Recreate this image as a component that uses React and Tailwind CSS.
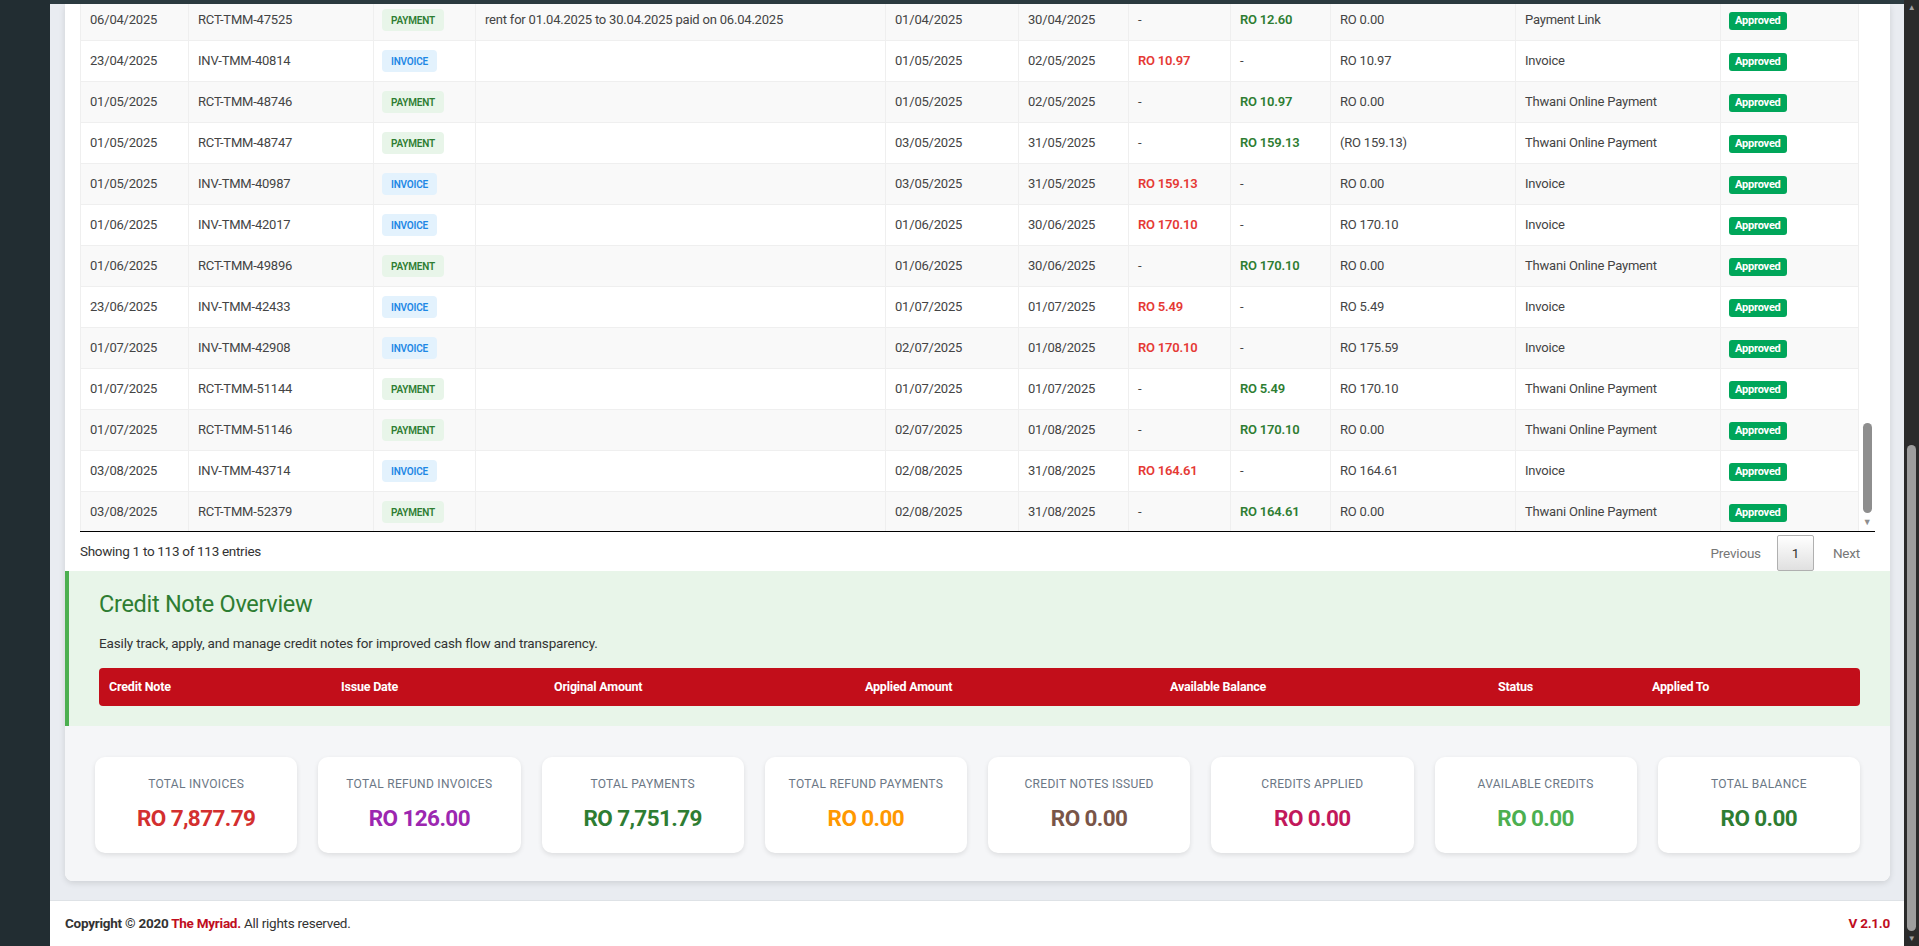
import React from "react";

const rows = [
  ["06/04/2025", "RCT-TMM-47525", "PAYMENT", "rent for 01.04.2025 to 30.04.2025 paid on 06.04.2025", "01/04/2025", "30/04/2025", "-", "RO 12.60", "RO 0.00", "Payment Link"],
  ["23/04/2025", "INV-TMM-40814", "INVOICE", "", "01/05/2025", "02/05/2025", "RO 10.97", "-", "RO 10.97", "Invoice"],
  ["01/05/2025", "RCT-TMM-48746", "PAYMENT", "", "01/05/2025", "02/05/2025", "-", "RO 10.97", "RO 0.00", "Thwani Online Payment"],
  ["01/05/2025", "RCT-TMM-48747", "PAYMENT", "", "03/05/2025", "31/05/2025", "-", "RO 159.13", "(RO 159.13)", "Thwani Online Payment"],
  ["01/05/2025", "INV-TMM-40987", "INVOICE", "", "03/05/2025", "31/05/2025", "RO 159.13", "-", "RO 0.00", "Invoice"],
  ["01/06/2025", "INV-TMM-42017", "INVOICE", "", "01/06/2025", "30/06/2025", "RO 170.10", "-", "RO 170.10", "Invoice"],
  ["01/06/2025", "RCT-TMM-49896", "PAYMENT", "", "01/06/2025", "30/06/2025", "-", "RO 170.10", "RO 0.00", "Thwani Online Payment"],
  ["23/06/2025", "INV-TMM-42433", "INVOICE", "", "01/07/2025", "01/07/2025", "RO 5.49", "-", "RO 5.49", "Invoice"],
  ["01/07/2025", "INV-TMM-42908", "INVOICE", "", "02/07/2025", "01/08/2025", "RO 170.10", "-", "RO 175.59", "Invoice"],
  ["01/07/2025", "RCT-TMM-51144", "PAYMENT", "", "01/07/2025", "01/07/2025", "-", "RO 5.49", "RO 170.10", "Thwani Online Payment"],
  ["01/07/2025", "RCT-TMM-51146", "PAYMENT", "", "02/07/2025", "01/08/2025", "-", "RO 170.10", "RO 0.00", "Thwani Online Payment"],
  ["03/08/2025", "INV-TMM-43714", "INVOICE", "", "02/08/2025", "31/08/2025", "RO 164.61", "-", "RO 164.61", "Invoice"],
  ["03/08/2025", "RCT-TMM-52379", "PAYMENT", "", "02/08/2025", "31/08/2025", "-", "RO 164.61", "RO 0.00", "Thwani Online Payment"],
];

const colWidths = [108, 185, 102, 410, 133, 110, 102, 100, 185, 205, 138];

const creditCols = [
  ["Credit Note", 232],
  ["Issue Date", 213],
  ["Original Amount", 311],
  ["Applied Amount", 305],
  ["Available Balance", 328],
  ["Status", 154],
  ["Applied To", 218],
];

const stats = [
  { label: "Total Invoices", value: "RO 7,877.79", color: "text-[#d32f2f]" },
  { label: "Total Refund Invoices", value: "RO 126.00", color: "text-[#9c27b0]" },
  { label: "Total Payments", value: "RO 7,751.79", color: "text-[#2e7d32]" },
  { label: "Total Refund Payments", value: "RO 0.00", color: "text-[#ff9800]" },
  { label: "Credit Notes Issued", value: "RO 0.00", color: "text-[#795548]" },
  { label: "Credits Applied", value: "RO 0.00", color: "text-[#c2185b]" },
  { label: "Available Credits", value: "RO 0.00", color: "text-[#4caf50]" },
  { label: "Total Balance", value: "RO 0.00", color: "text-[#2e7d32]" },
];

const TypeBadge = ({ type }) =>
  type === "PAYMENT" ? (
    <span className="inline-flex h-[22px] items-center rounded-[4px] bg-[#e8f5e9] px-[9px] text-[10px] font-semibold tracking-[-0.2px] text-[#2e7d32]">
      PAYMENT
    </span>
  ) : (
    <span className="inline-flex h-[22px] items-center rounded-[4px] bg-[#e3f2fd] px-[9px] text-[10px] font-semibold tracking-[-0.2px] text-[#1e88e5]">
      INVOICE
    </span>
  );

const Amount = ({ value, tone }) => {
  if (value === "-") return <span>-</span>;
  return (
    <span className={tone === "red" ? "font-semibold text-[#e53935]" : "font-semibold text-[#2e7d32]"}>
      {value}
    </span>
  );
};

const StatementTable = () => (
  <div className="flex h-[528px] border-b border-black">
    <div className="flex-1 overflow-hidden">
      <table className="-mt-[5px] w-full table-fixed border-collapse">
        <colgroup>
          {colWidths.map((w, i) => (
            <col key={i} style={{ width: w }} />
          ))}
        </colgroup>
        <tbody>
          {rows.map((r, i) => (
            <tr key={i} className={i % 2 === 0 ? "h-[41px] bg-[#f9f9f9]" : "h-[41px] bg-white"}>
              <td className="border border-[#efefef] px-[9px]">{r[0]}</td>
              <td className="border border-[#efefef] px-[9px]">{r[1]}</td>
              <td className="border border-[#efefef] px-[8px]">
                <TypeBadge type={r[2]} />
              </td>
              <td className="border border-[#efefef] px-[9px] whitespace-nowrap">{r[3]}</td>
              <td className="border border-[#efefef] px-[9px]">{r[4]}</td>
              <td className="border border-[#efefef] px-[9px]">{r[5]}</td>
              <td className="border border-[#efefef] px-[9px]">
                <Amount value={r[6]} tone="red" />
              </td>
              <td className="border border-[#efefef] px-[9px]">
                <Amount value={r[7]} tone="green" />
              </td>
              <td className="border border-[#efefef] px-[9px]">{r[8]}</td>
              <td className="border border-[#efefef] px-[9px]">{r[9]}</td>
              <td className="border border-[#efefef] px-[8px]">
                <span className="inline-flex h-[18px] items-center rounded-[3px] bg-[#00a65a] px-[6px] text-[11px] font-bold tracking-[-0.2px] text-white">
                  Approved
                </span>
              </td>
            </tr>
          ))}
        </tbody>
      </table>
    </div>
    {/* inner scrollbar */}
    <div className="flex w-[16px] flex-col items-center bg-white">
      <div className="mt-[419px] h-[90px] w-[9px] rounded-full bg-[#8e8e8e]" />
      <div className="mt-[5px] text-[9px] leading-none text-[#8e8e8e]">▼</div>
    </div>
  </div>
);

export default function App() {
  return (
    <div className="flex h-[946px] w-[1919px] overflow-hidden bg-[#e9ecf1] font-['Roboto','Noto_Sans',sans-serif] text-[13px] tracking-[-0.2px] text-[#444]">
      <aside className="w-[50px] shrink-0 bg-[#222d32]" />

      <div className="flex min-w-0 flex-1 flex-col">
        <div className="h-[4px] shrink-0 bg-[#2c3b41]" />

        <div className="pl-[15px] pr-[14px]">
          <div className="rounded-b-[8px] bg-white shadow-[0_2px_6px_rgba(0,0,0,0.12)]">
            <div className="px-[15px]">
              <StatementTable />
              <div className="flex h-[39px] items-center justify-between pr-[15px]">
                <span className="text-[13.5px] tracking-[-0.3px] text-[#333]">Showing 1 to 113 of 113 entries</span>
                <div className="flex items-center pt-[3px] text-[13.5px]">
                  <span className="pr-[16px] text-[#777]">Previous</span>
                  <span className="flex h-[36px] w-[37px] items-center justify-center rounded-[2px] border border-[#b0b0b0] bg-gradient-to-b from-white to-[#e0e0e0] text-[#333]">
                    1
                  </span>
                  <span className="pl-[19px] text-[#777]">Next</span>
                </div>
              </div>
            </div>

            {/* credit note overview */}
            <section className="border-l-[4px] border-[#4caf50] bg-[#e8f5e9] pb-[20px] pl-[30px] pr-[30px] pt-[18px]">
              <h2 className="text-[23.5px] leading-[30px] tracking-[-0.3px] text-[#2e7d32]">Credit Note Overview</h2>
              <p className="mt-[14px] text-[13.5px] leading-[20px] tracking-[-0.15px] text-[#333]">
                Easily track, apply, and manage credit notes for improved cash flow and transparency.
              </p>
              <div className="mt-[15px] flex h-[38px] items-center rounded-[4px] bg-[#c20e1a] text-[12.5px] font-bold tracking-[-0.2px] text-white">
                {creditCols.map(([label, w]) => (
                  <div key={label} className="shrink-0 px-[10px]" style={{ width: w }}>
                    {label}
                  </div>
                ))}
              </div>
            </section>

            {/* totals */}
            <div className="rounded-b-[8px] bg-[#f5f6f8] px-[30px] pb-[28px] pt-[31px]">
              <div className="grid grid-cols-8 gap-[21px]">
                {stats.map((s) => (
                  <div
                    key={s.label}
                    className="flex h-[96px] flex-col items-center rounded-[10px] bg-white pt-[19px] shadow-[0_2px_5px_rgba(0,0,0,0.10)]"
                  >
                    <div className="text-[12px] uppercase leading-[16px] tracking-[0.3px] text-[#6b7785]">{s.label}</div>
                    <div className={`mt-[11px] text-[22.5px] font-bold leading-[30px] tracking-[-0.6px] ${s.color}`}>
                      {s.value}
                    </div>
                  </div>
                ))}
              </div>
            </div>
          </div>
        </div>

        <div className="flex-1" />

        <footer className="flex h-[46px] shrink-0 items-center justify-between border-t border-[#dee2e6] bg-white pl-[15px] pr-[14px] text-[13.5px] tracking-[-0.25px] text-[#333]">
          <div>
            <span className="font-bold">Copyright © 2020 </span>
            <span className="font-bold text-[#c00d1e]">The Myriad.</span>
            <span> All rights reserved.</span>
          </div>
          <span className="font-bold text-[#c00d1e]">V 2.1.0</span>
        </footer>
      </div>

      {/* page scrollbar */}
      <div className="flex w-[15px] shrink-0 flex-col items-center bg-[#2b2b2b]">
        <div className="mt-[4px] text-[8px] leading-none text-[#a0a0a0]">▲</div>
        <div className="mt-[433px] w-[9px] flex-1 rounded-full bg-[#9e9e9e]" />
        <div className="mb-[3px] mt-[4px] text-[8px] leading-none text-[#a0a0a0]">▼</div>
      </div>
    </div>
  );
}
